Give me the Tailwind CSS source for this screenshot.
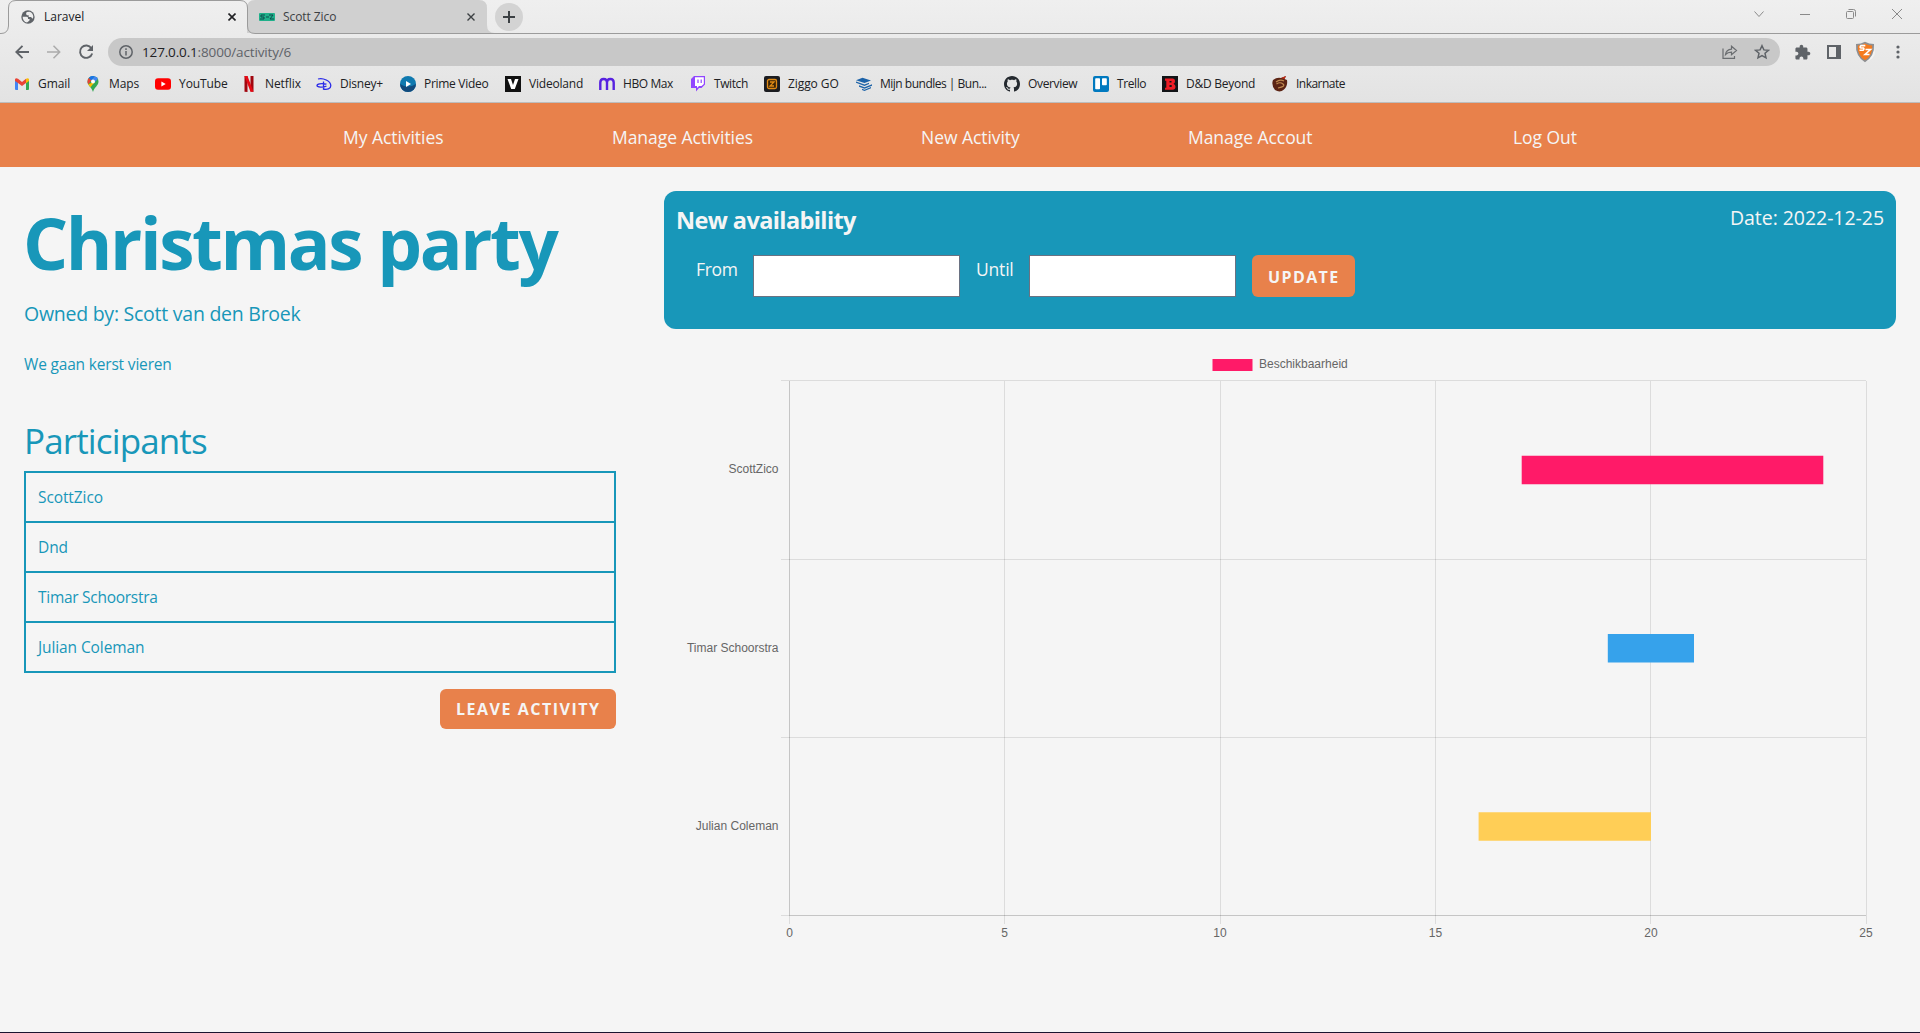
<!DOCTYPE html>
<html lang="en">
<head>
<meta charset="utf-8">
<title>Laravel</title>
<script src="https://cdn.jsdelivr.net/npm/@tailwindcss/browser@4"></script>
</head>
<body class="h-[1033px] w-[1920px] overflow-hidden bg-[#f5f5f5] font-['Open_Sans',sans-serif]">
<div class="flex h-full flex-col border-b border-[#1b1430]">
<header class="h-[103px] shrink-0 border-b border-[#bdbdbd] bg-linear-to-b from-[#efefef] to-[#e3e3e3] text-xs text-[#202124]">
  <!-- tab strip -->
  <div class="relative flex h-[34px] items-center">
    <svg class="absolute inset-0" width="1920" height="34" fill="none">
      <path d="M247 33V8Q247 0 255 0H479Q487 0 487 8V25Q487 33 495 33Z" fill="#d0d0d0"/>
      <path d="M0 33.5H1Q8 33.5 8.5 26V8Q8.5 .5 16 .5H240Q247.500 .5 247.500 8V26Q247.500 33.500 255 33.500H1920" stroke="#9b9b9b"/>
    </svg>
    <div class="relative flex w-[240px] items-center pl-[20px]">
      <svg class="size-4 text-[#5f6368]" viewBox="0 0 24 24"><circle cx="12" cy="12" r="10" fill="currentColor"/><path d="M4 11.500h6q2 0 2 2v1.500h2.500l-.5 2.500-3.500 2.800C6.500 19.500 3.800 16 4 11.500zM10 4.500l4.500-.3C18 5.500 20 8.500 20 12l-1 2.500-2.500-2.500H13V9.500h-2.500L9 7.500z" fill="#eee"/></svg>
      <span class="ml-[8px]">Laravel</span>
    </div>
    <div class="relative flex w-[19px] items-center -ml-[12px]"><svg width="8" height="8" viewBox="0 0 8 8" stroke="#202124" stroke-width="1.6"><path d="M.5.5l7 7M7.500.5l-7 7"/></svg></div>
    <div class="relative ml-[12px] flex w-[208px] items-center">
      <svg width="16" height="8" viewBox="0 0 16 8"><rect width="16" height="8" rx="1" fill="#20b08a"/><path d="M6 2H2v2h3v2H1M7 4h3M10 2h4l-3 4h4" fill="none" stroke="#0c4a4c" stroke-width="1"/></svg>
      <span class="ml-[8px] tracking-[-0.08px] text-[#3c4043]">Scott Zico</span>
    </div>
    <svg class="relative" width="8" height="8" viewBox="0 0 8 8" stroke="#3c4043" stroke-width="1.400"><path d="M.5.5l7 7M7.500.5l-7 7"/></svg>
    <div class="relative ml-[20px] flex size-7 items-center justify-center rounded-full bg-[#d3d3d3]"><svg width="12" height="12" stroke="#3c4043" stroke-width="2"><path d="M6 0v12M0 6h12"/></svg></div>
    <div class="relative ml-auto flex items-center gap-[36px] pr-[18px] pb-[6px]">
      <svg width="10" height="10" fill="none" stroke="#8a8a8a"><path d="M.5 2.500L5 7.500l4.500-5"/></svg>
      <svg width="10" height="10" stroke="#8a8a8a"><path d="M0 5.500h10"/></svg>
      <svg width="10" height="10" fill="none" stroke="#8a8a8a"><rect x=".5" y="2.500" width="7" height="7" rx="1"/><path d="M2.500.5H7.500Q9.500.5 9.500 2.500V7.500"/></svg>
      <svg width="10" height="10" stroke="#8a8a8a"><path d="M0 0l10 10M10 0L0 10"/></svg>
    </div>
  </div>
  <!-- navigation and address bar -->
  <div class="flex h-[36px] items-center pl-[15px]">
    <svg width="14" height="14" fill="none" stroke="#5f6368" stroke-width="1.900"><path d="M14 7H1.500M7.500 .8L1.300 7l6.200 6.200"/></svg>
    <svg class="ml-[18px]" width="14" height="14" fill="none" stroke="#ababab" stroke-width="1.500"><path d="M0 7h12.500M6.500 .8L12.700 7l-6.200 6.200"/></svg>
    <svg class="ml-[17px]" width="16" height="16" viewBox="0 0 16 16" fill="none"><path d="M13.400 4.200A6.200 6.200 0 1 0 14.200 9.500" stroke="#5f6368" stroke-width="1.900"/><path d="M15 1v6H9z" fill="#5f6368"/></svg>
    <div class="ml-[14px] flex h-7 w-[1672px] items-center rounded-full bg-[#c8c8c8] pl-[11px] pr-[10px]">
      <svg width="14" height="14" fill="none" stroke="#5f6368" stroke-width="1.500"><circle cx="7" cy="7" r="6.200"/><path d="M7 6v4.500M7 3.300v1.600"/></svg>
      <span class="ml-[9px] text-[13.5px] tracking-[-0.15px] text-[#5f6368]"><span class="text-[#202124]">127.0.0.1</span>:8000/activity/6</span>
      <svg class="ml-auto" width="16" height="14" fill="none" stroke="#6a6d70" stroke-width="1.200"><path d="M1 3.500v9.900h11.500V11"/><path d="M3.500 9.500C4 6 6 4.500 9.500 4.200V1.200l5 4.300-5 4.300V7.200C7 7.200 5 7.800 3.500 9.500z"/></svg>
      <svg class="ml-[16px]" width="16" height="16" viewBox="0 0 16 16" fill="none" stroke="#5f6368" stroke-width="1.500"><path d="M8 1.700l1.900 4.200 4.500.4-3.400 3 1 4.500L8 11.500l-4 2.300 1-4.500-3.400-3 4.500-.4z"/></svg>
    </div>
    <svg class="ml-[14px]" width="17" height="17" viewBox="0 0 24 24" fill="#5f6368"><path d="M20.500 11H19V7c0-1.100-.9-2-2-2h-4V3.500C13 2.120 11.880 1 10.500 1S8 2.120 8 3.500V5H4c-1.100 0-1.990.9-1.990 2v3.800H3.500c1.490 0 2.700 1.210 2.700 2.700s-1.210 2.700-2.700 2.700H2V20c0 1.100.9 2 2 2h3.800v-1.500c0-1.490 1.210-2.700 2.700-2.700 1.490 0 2.700 1.210 2.700 2.700V22H17c1.100 0 2-.9 2-2v-4h1.500c1.380 0 2.500-1.120 2.500-2.500S21.880 11 20.500 11z"/></svg>
    <svg class="ml-[16px]" width="14" height="14"><path d="M1 1h12v12H1z" fill="none" stroke="#5f6368" stroke-width="2"/><path d="M9 1h4v12H9z" fill="#5f6368"/></svg>
    <svg class="ml-[14px]" width="20" height="22" viewBox="0 0 20 22"><circle cx="11" cy="11" r="9" fill="#f3f3f3"/><path d="M1 3Q6 3 10 .8 14 3 19 3 20 15 10 21.300 0 15 1 3z" fill="#8d8f92"/><path d="M2.800 4.500Q7 4.300 10 2.500 13 4.300 17.200 4.500 18 14.500 10 19.300 2 14.500 2.800 4.500z" fill="#f47b20"/><path d="M10.300 4.600H6Q4.200 6.500 6 7H8.500Q9.500 8 8 9.300H4.500M10.500 8.500H15.500L10 13.500H14.500" stroke="#fff" stroke-width="1.600" fill="none"/></svg>
    <svg class="ml-[21px]" width="4" height="16" fill="#5f6368"><circle cx="2" cy="3" r="1.600"/><circle cx="2" cy="8" r="1.600"/><circle cx="2" cy="13" r="1.600"/></svg>
  </div>
  <!-- bookmarks -->
  <nav class="flex h-[28px] items-center pl-[14px] tracking-[-0.08px] whitespace-nowrap">
    <a class="flex w-[71px] items-center gap-[8px]"><svg width="16" height="16" viewBox="0 0 16 16"><path d="M1 3.500h3V14H2q-1 0-1-1z" fill="#4285f4"/><path d="M12 3.500h3V13q0 1-1 1h-2z" fill="#34a853"/><path d="M1 3.500Q1.500 1.500 4 2.800L8 6l4-3.200V7L8 10 4 7 1 5z" fill="#ea4335"/><path d="M12 2.800Q14.500 1.500 15 3.500V5l-3 2.200z" fill="#fbbc04"/></svg><span>Gmail</span></a>
    <a class="flex w-[70px] items-center gap-[8px]"><svg width="16" height="16" viewBox="0 0 16 16"><path d="M8 0a5.500 5.500 0 0 1 5.500 5.500C13.500 9.500 9.500 11 8 16 6.500 11 2.500 9.500 2.500 5.500A5.500 5.500 0 0 1 8 0z" fill="#34a853"/><path d="M3.800 1.900A5.500 5.500 0 0 1 9.700.3L6 5z" fill="#1a73e8"/><path d="M9.700.3a5.500 5.500 0 0 1 3.200 2.700L9.500 6.500 6.500 4.500z" fill="#4285f4"/><path d="M3.800 1.900L6.500 4.500 3.200 8.300Q1.500 5 3.800 1.900z" fill="#ea4335"/><path d="M3.200 8.300L10 5.500 5.500 11.200Q4 9.700 3.200 8.300z" fill="#fbbc04"/><circle cx="8" cy="5.500" r="2" fill="#fff"/></svg><span>Maps</span></a>
    <a class="flex w-[86px] items-center gap-[8px]"><svg width="16" height="16" viewBox="0 0 16 16"><rect y="2.300" width="16" height="11.400" rx="3" fill="#f00"/><path d="M6.400 5.500v5L10.700 8z" fill="#fff"/></svg><span>YouTube</span></a>
    <a class="flex w-[75px] items-center gap-[8px]"><svg width="16" height="16" viewBox="0 0 16 16"><path d="M3.500 0h3v16l-3-.3zM9.500 0h3v15.700l-3-.3z" fill="#a1060f"/><path d="M3.500 0h3l6 15.700-3 .1z" fill="#e50914"/></svg><span>Netflix</span></a>
    <a class="flex w-[84px] items-center gap-[8px]"><svg width="16" height="16" viewBox="0 0 16 16" fill="none" stroke="#2a2ae8" stroke-width="1.300"><path d="M2 3C7 1.500 14.800 5 14.800 9.800 14.800 13 11 14 7 13M7.500 5.500V14M10.500 8.200C5 7 1 8 1 9.500 1 11.300 7 11.800 10.500 10"/></svg><span class="tracking-[-0.2px]">Disney+</span></a>
    <a class="flex w-[105px] items-center gap-[8px]"><svg width="16" height="16" viewBox="0 0 16 16"><circle cx="8" cy="8" r="8" fill="#0f79af"/><path d="M0 8a8 8 0 0 0 16 0Q8 13 0 8z" fill="#124a7c"/><path d="M6 5v6l5-3z" fill="#fff"/></svg><span class="tracking-[-0.3px]">Prime Video</span></a>
    <a class="flex w-[94px] items-center gap-[8px]"><svg width="16" height="16" viewBox="0 0 16 16"><path d="M0 0h16v16H0z" fill="#111"/><path d="M2.500 3H6l2 6 2-6h3.500L9.800 13H6.200z" fill="#fff"/></svg><span class="tracking-[-0.2px]">Videoland</span></a>
    <a class="flex w-[91px] items-center gap-[8px]"><svg width="16" height="16" viewBox="0 0 16 16" fill="none" stroke="#5822e0" stroke-width="2.400"><path d="M1.300 14V6.500Q1.300 3 4.700 3 8 3 8 6.500V14M8 6.500Q8 3 11.300 3 14.700 3 14.700 6.500V14"/></svg><span class="tracking-[-0.4px]">HBO Max</span></a>
    <a class="flex w-[74px] items-center gap-[8px]"><svg width="16" height="16" viewBox="0 0 16 16"><path d="M4 0h11v8.500L11.500 12H9l-3 3.500V12H1V3z" fill="#9146ff"/><path d="M5 1.200h8.800V8L11.500 10H9l-2 2v-2H5z" fill="#fff"/><path d="M8 3.500v3.500M11.200 3.500v3.500" stroke="#9146ff" stroke-width="1.200"/></svg><span class="tracking-[-0.4px]">Twitch</span></a>
    <a class="flex w-[92px] items-center gap-[8px]"><svg width="16" height="16" viewBox="0 0 16 16"><rect width="16" height="16" rx="2" fill="#1b1c20"/><rect x="3.500" y="3.500" width="9" height="9" rx="1.500" fill="#3a2304" stroke="#e08a14" stroke-width="1.300"/><path d="M6 6h4L6 10h4" fill="none" stroke="#e08a14" stroke-width="1.300"/></svg><span>Ziggo GO</span></a>
    <a class="flex w-[148px] items-center gap-[8px]"><svg width="16" height="16" viewBox="0 0 16 16" fill="#1d63a8"><path d="M0 4.200l6.500-2.500L15 4.500 8.500 7zM0 5.400l8.500 3L13 6.700v1.400L8.500 10 0 6.800zM3 9.300l5.500 2L16 8.200v1.500l-7.500 3L3 10.700zM6 12.800l2.500.9L15 11v1.200L8.500 15 6 14z"/></svg><span class="tracking-[-0.5px]">Mijn bundles | Bun...</span></a>
    <a class="flex w-[89px] items-center gap-[8px]"><svg width="16" height="16" viewBox="0 0 16 16" fill="#24292f"><path d="M8 0C3.580 0 0 3.580 0 8c0 3.540 2.290 6.530 5.470 7.590.4.070.55-.17.55-.38 0-.19-.01-.82-.01-1.490-2.010.37-2.530-.49-2.690-.94-.09-.23-.48-.94-.82-1.130-.28-.15-.68-.52-.01-.53.63-.01 1.080.58 1.230.82.72 1.210 1.870.87 2.330.66.070-.52.280-.87.510-1.070-1.780-.2-3.640-.89-3.640-3.950 0-.87.310-1.590.820-2.150-.080-.2-.360-1.020.080-2.120 0 0 .670-.210 2.200.820.640-.180 1.320-.270 2-.270s1.360.090 2 .270c1.530-1.040 2.200-.820 2.200-.820.440 1.100.160 1.920.080 2.120.510.560.820 1.270.820 2.150 0 3.070-1.870 3.750-3.650 3.950.290.250.540.730.540 1.480 0 1.070-.010 1.930-.010 2.200 0 .210.150.460.550.380A8.010 8.010 0 0 0 16 8c0-4.420-3.580-8-8-8z"/></svg><span class="tracking-[-0.35px]">Overview</span></a>
    <a class="flex w-[69px] items-center gap-[8px]"><svg width="16" height="16" viewBox="0 0 16 16"><rect width="16" height="16" rx="2" fill="#0079bf"/><rect x="2.200" y="2.200" width="4.800" height="11" rx=".8" fill="#fff"/><rect x="9" y="2.200" width="4.800" height="7" rx=".8" fill="#fff"/></svg><span class="tracking-[-0.4px]">Trello</span></a>
    <a class="flex w-[110px] items-center gap-[8px]"><svg width="16" height="16" viewBox="0 0 16 16"><path d="M0 0h16v16H0z" fill="#121417"/><path d="M3 2.500h7.500q2.500 0 2.500 2.700 0 2-1.500 2.500 2 .8 2 3 0 3-3 3H3v-2h1.300v-7H3z" fill="#ee1c25"/><path d="M7.500 5h2v1.600h-2zM7.500 9h2.200v2H7.500z" fill="#121417"/></svg><span class="tracking-[-0.25px]">D&amp;D Beyond</span></a>
    <a class="flex items-center gap-[8px]"><svg width="16" height="16" viewBox="0 0 16 16"><path d="M1 4Q5 1 9 2l5-2-1.500 3L15 4q1 6-3 9.500T3 14Q-1 9 1 4z" fill="#5c2414"/><path d="M4 6q4-3 8-1M4.500 8Q8 5.500 11 8T6 12" fill="none" stroke="#c08a50" stroke-width="1.200"/><path d="M9 2l5-2-1.500 3z" fill="#c22a16"/></svg><span class="tracking-[-0.52px]">Inkarnate</span></a>
  </nav>
</header>

<nav class="flex h-16 shrink-0 gap-[168px] bg-[#e8814b] pt-[20px] pl-[343px] text-[17.5px] leading-7 tracking-[-0.05px] whitespace-nowrap text-[#f5f5f5]">
  <a class="w-[101px]">My Activities</a>
  <a class="w-[141px]">Manage Activities</a>
  <a class="w-[99px]">New Activity</a>
  <a class="w-[125px]">Manage Accout</a>
  <a class="ml-[32px]">Log Out</a>
</nav>

<main class="flex gap-12 px-6 whitespace-nowrap text-[#1897b9]">
  <section class="w-[592px] pt-[40px]">
    <h1 class="-ml-px text-[71px] leading-[72px] font-bold tracking-[-2.4px]">Christmas party</h1>
    <p class="mt-[21px] text-[19.5px] leading-7 tracking-[-0.25px]">Owned by: Scott van den Broek</p>
    <p class="mt-[24px] text-[15.5px] leading-6 tracking-[-0.18px]">We gaan kerst vieren</p>
    <h2 class="mt-[45px] text-[35px] leading-10 tracking-[-0.87px]">Participants</h2>
    <ul class="mt-[10px] divide-y-2 divide-[#1897b9] border-2 border-[#1897b9] text-[15.5px] leading-[47px] tracking-[-0.1px]">
      <li class="pt-px pl-3">ScottZico</li>
      <li class="pt-px pl-3">Dnd</li>
      <li class="pt-px pl-3 tracking-[-0.28px]">Timar Schoorstra</li>
      <li class="pt-px pl-3">Julian Coleman</li>
    </ul>
    <button class="mt-4 ml-auto block h-10 w-44 rounded-md bg-[#e8814b] pl-4 text-left font-bold tracking-[1.52px] text-[#f5f5f5]">LEAVE ACTIVITY</button>
  </section>

  <section class="w-[1232px] pt-6">
    <div class="flex h-[138px] justify-between rounded-xl bg-[#1897b9] px-3 text-[#f5f5f5]">
      <div>
        <h3 class="mt-[13px] text-[23.5px] leading-8 font-bold tracking-[-0.6px]">New availability</h3>
        <form class="mt-[19px] flex pl-5 text-[17.5px] leading-7">
          <label class="w-[57px] tracking-[-0.35px]">From</label>
          <input class="h-[42px] w-[207px] border border-gray-500 bg-white">
          <label class="ml-4 w-[53px] tracking-[-0.2px]">Until</label>
          <input class="h-[42px] w-[207px] border border-gray-500 bg-white">
          <button class="ml-4 h-[42px] w-[103px] rounded-md bg-[#e8814b] pt-px pl-4 text-left text-base font-bold tracking-[1.4px]">UPDATE</button>
        </form>
      </div>
      <p class="mt-[13px] text-[19.5px] leading-7 tracking-[-0.05px]">Date: 2022-12-25</p>
    </div>
    <svg class="block font-['Liberation_Sans',Arial,sans-serif] text-xs" width="1232" height="640" viewBox="664 329 1232 640" fill="#666">
      <path d="M1212.500 359h40v12h-40z" fill="#ff1a68"/>
      <text x="1259" y="368">Beschikbaarheid</text>
      <g stroke="#000" stroke-opacity=".1" shape-rendering="crispEdges">
        <path d="M781 380.500H1866M781 559.500H1866M781 737.500H1866M781 915.500H1866"/>
        <path d="M789.500 381V924M1004.500 381V924M1220.500 381V924M1435.500 381V924M1650.500 381V924M1866.500 381V924"/>
        <path d="M789.500 381V916M789 915.500H1866"/>
      </g>
      <path d="M1521.700 455.700H1823.300V484.300H1521.700z" fill="#ff1a68"/>
      <path d="M1607.800 634H1694V662.600H1607.800z" fill="#36a2eb"/>
      <path d="M1478.600 812.200H1651V840.800H1478.600z" fill="#ffce56"/>
      <g text-anchor="end"><text x="778.500" y="473">ScottZico</text><text x="778.500" y="652">Timar Schoorstra</text><text x="778.500" y="830">Julian Coleman</text></g>
      <g text-anchor="middle"><text x="789.500" y="937">0</text><text x="1004.500" y="937">5</text><text x="1220" y="937">10</text><text x="1435.500" y="937">15</text><text x="1651" y="937">20</text><text x="1866" y="937">25</text></g>
    </svg>
  </section>
</main>
</div>
</body>
</html>
